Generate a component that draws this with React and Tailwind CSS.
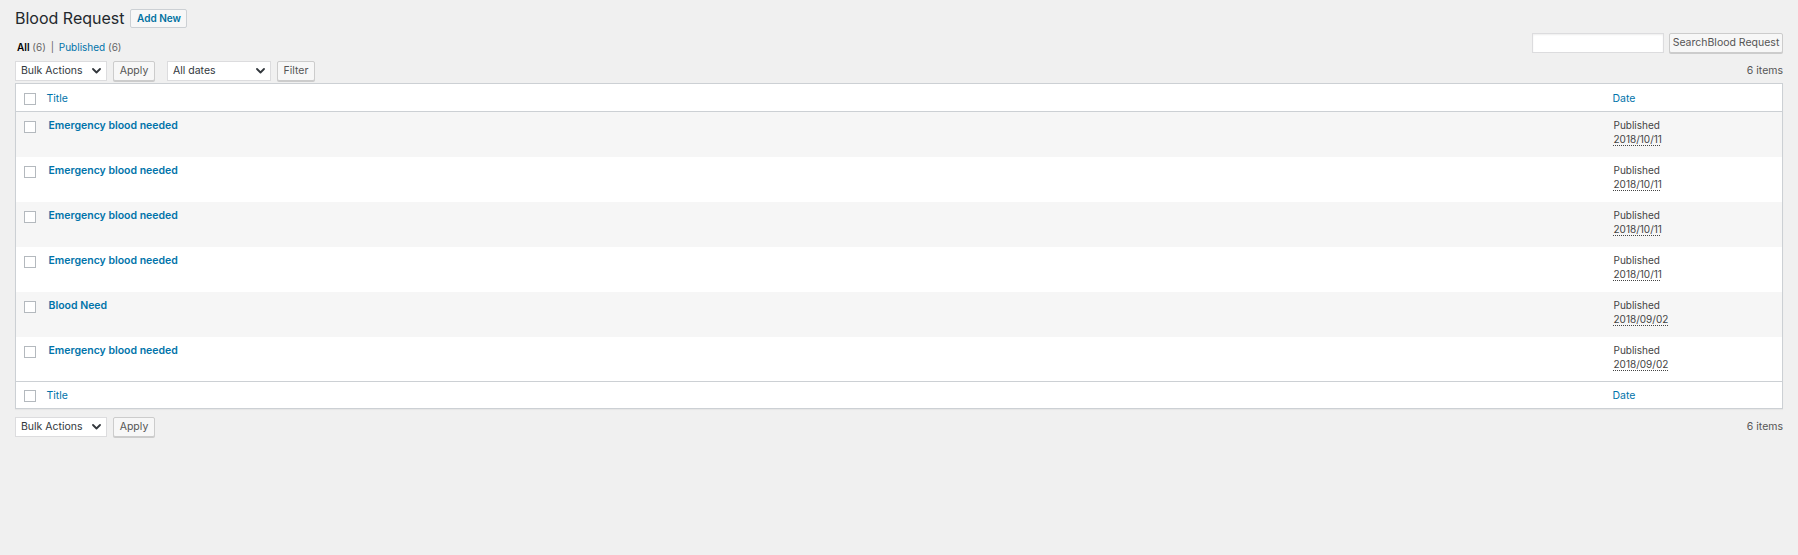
import React from 'react'

const rows = [
  { title: 'Emergency blood needed', date: '2018/10/11' },
  { title: 'Emergency blood needed', date: '2018/10/11' },
  { title: 'Emergency blood needed', date: '2018/10/11' },
  { title: 'Emergency blood needed', date: '2018/10/11' },
  { title: 'Blood Need', date: '2018/09/02' },
  { title: 'Emergency blood needed', date: '2018/09/02' },
]

function Chevron() {
  return (
    <svg width="9" height="6" viewBox="0 0 9 6" className="shrink-0">
      <path d="M1 1l3.5 3.5L8 1" fill="none" stroke="#32373c" strokeWidth="1.8" strokeLinecap="round" strokeLinejoin="round" />
    </svg>
  )
}

function Select({ label, w }) {
  return (
    <div className={`flex h-[20px] items-center justify-between border border-[#dcdcde] bg-white pl-[5px] pr-[5px] text-[10.5px] text-[#32373c] ${w}`}>
      <span>{label}</span>
      <Chevron />
    </div>
  )
}

function Button({ children, w }) {
  return (
    <button className={`flex h-[20px] items-center justify-center rounded-[2px] border border-[#cccccc] bg-[#f7f7f7] text-[10.5px] text-[#555] shadow-[0_1px_0_#cccccc] ${w}`}>
      {children}
    </button>
  )
}

function Check() {
  return <span className="block h-[12px] w-[12px] border border-[#b4b9be] bg-white" />
}

export default function App() {
  return (
    <div className="min-h-screen bg-[#f0f0f0] px-[15px] pt-[9px] font-['Inter',sans-serif] text-[#444]">
      {/* heading */}
      <div className="flex h-[19px] items-center gap-[6px]">
        <h1 className="text-[16px] leading-[19px] font-normal text-[#23282d]">Blood Request</h1>
        <a className="flex h-[19px] w-[57px] items-center justify-center rounded-[2px] border border-[#ccd0d4] bg-[#f7f7f7] text-[10px] font-semibold text-[#0071a1]">
          Add New
        </a>
      </div>

      {/* views + search */}
      <div className="mt-[5px] flex h-[20px] items-start justify-between">
        <div className="pl-[2px] pt-[7px] text-[10px] leading-[14px] text-[#666]">
          <span className="font-semibold text-black">All</span> (6) <span className="px-[2px] text-[#666]">|</span>{' '}
          <span className="text-[#0073aa]">Published</span> (6)
        </div>
        <div className="flex items-center gap-[5px]">
          <div className="h-[20px] w-[132px] border border-[#dcdcde] bg-white shadow-[inset_0_1px_2px_rgba(0,0,0,0.07)]" />
          <Button w="w-[114px]">SearchBlood Request</Button>
        </div>
      </div>

      {/* top tablenav */}
      <div className="mt-[8px] flex h-[20px] items-center justify-between">
        <div className="flex items-center">
          <Select label="Bulk Actions" w="w-[92px]" />
          <div className="ml-[6px]"><Button w="w-[42px]">Apply</Button></div>
          <div className="ml-[12px]"><Select label="All dates" w="w-[104px]" /></div>
          <div className="ml-[6px]"><Button w="w-[38px]">Filter</Button></div>
        </div>
        <span className="text-[10.5px] text-[#555]">6 items</span>
      </div>

      {/* table */}
      <table className="mt-[2px] w-full border-collapse border border-[#ccd0d4] bg-white shadow-[0_1px_1px_rgba(0,0,0,0.04)]">
        <thead>
          <tr className="h-[28px] border-b border-[#ccd0d4]">
            <th className="w-[31px] pl-[8px] align-top pt-[9px]"><Check /></th>
            <th className="pt-[8px] text-left align-top text-[10.5px] leading-[14px] font-normal text-[#0073aa]">Title</th>
            <th className="w-[178px] pl-[8px] pt-[8px] text-left align-top text-[10.5px] leading-[14px] font-normal text-[#0073aa]">Date</th>
          </tr>
        </thead>
        <tbody>
          {rows.map((r, i) => (
            <tr key={i} className={`h-[45px] ${i % 2 === 0 ? 'bg-[#f6f6f6]' : 'bg-white'}`}>
              <td className="pl-[8px] pt-[9px] align-top"><Check /></td>
              <td className="pl-[2px] pt-[7px] align-top text-[10.5px] leading-[14px] font-semibold text-[#0073aa]">{r.title}</td>
              <td className="pl-[9px] pt-[6px] align-top text-[10px] leading-[14px] text-[#444]">
                <div>Published</div>
                <div className="underline decoration-dotted underline-offset-2">{r.date}</div>
              </td>
            </tr>
          ))}
        </tbody>
        <tfoot>
          <tr className="h-[27px] border-t border-[#ccd0d4]">
            <td className="pl-[8px] pt-[8px] align-top"><Check /></td>
            <td className="pt-[7px] align-top text-[10.5px] leading-[14px] text-[#0073aa]">Title</td>
            <td className="pl-[8px] pt-[7px] align-top text-[10.5px] leading-[14px] text-[#0073aa]">Date</td>
          </tr>
        </tfoot>
      </table>

      {/* bottom tablenav */}
      <div className="mt-[7px] flex h-[21px] items-center justify-between">
        <div className="flex items-center">
          <Select label="Bulk Actions" w="w-[92px]" />
          <div className="ml-[6px]"><Button w="w-[42px]">Apply</Button></div>
        </div>
        <span className="text-[10.5px] text-[#555]">6 items</span>
      </div>
    </div>
  )
}
